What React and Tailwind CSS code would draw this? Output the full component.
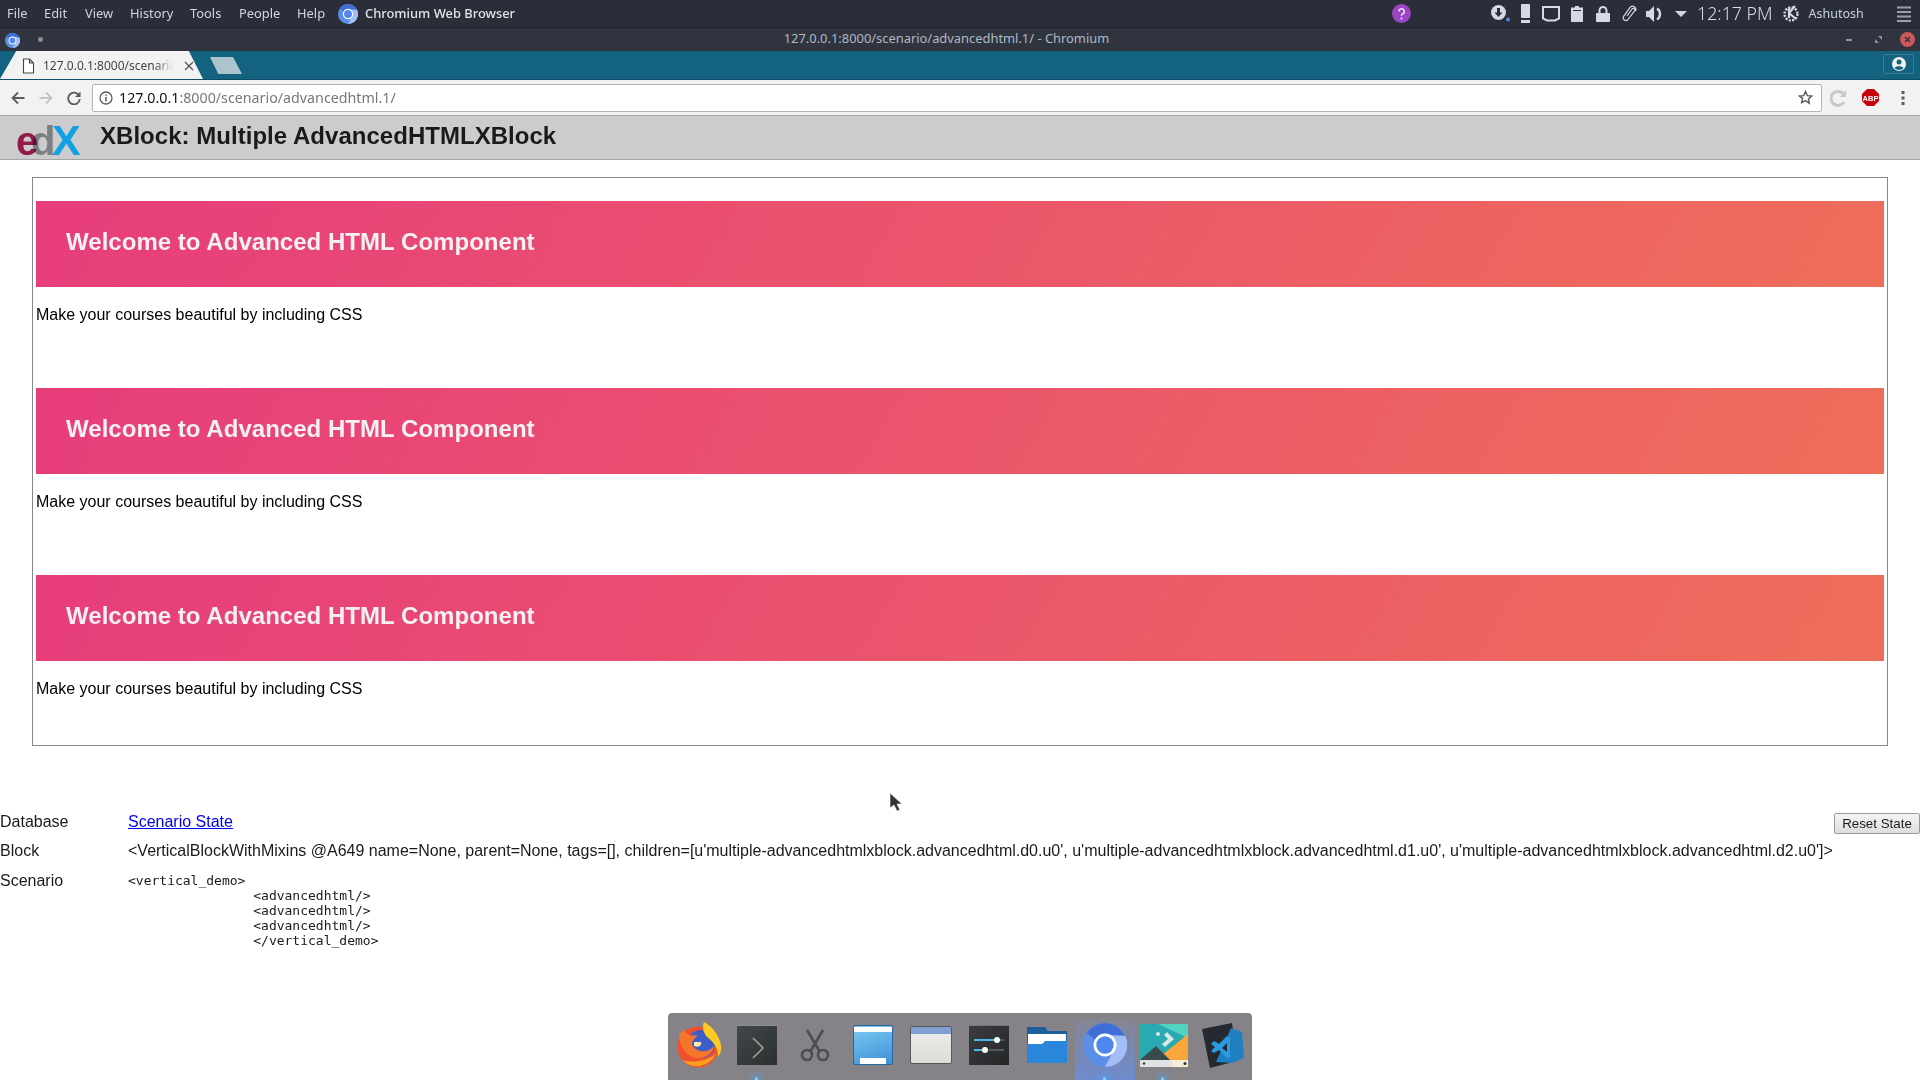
import React from 'react';

const MENU = [
  ['File', 'w-[37px]'],
  ['Edit', 'w-[41px]'],
  ['View', 'w-[45px]'],
  ['History', 'w-[60px]'],
  ['Tools', 'w-[49px]'],
  ['People', 'w-[58px]'],
  ['Help', 'w-[41px]'],
];

const SCENARIO = `<vertical_demo>
                <advancedhtml/>
                <advancedhtml/>
                <advancedhtml/>
                </vertical_demo>`;

const BLOCK_TEXT = "<VerticalBlockWithMixins @A649 name=None, parent=None, tags=[], children=[u'multiple-advancedhtmlxblock.advancedhtml.d0.u0', u'multiple-advancedhtmlxblock.advancedhtml.d1.u0', u'multiple-advancedhtmlxblock.advancedhtml.d2.u0']>";

function ChromiumIcon({ size = 20 }) {
  return (
    <svg width={size} height={size} viewBox="0 0 48 48">
      <circle cx="24" cy="24" r="24" fill="#5b8ee8" />
      <path d="M4 11A24 24 0 0 1 46.500 16L24 13a11 11 0 0 0-9 6z" fill="#3f6ed6" />
      <path d="M46 14a24 24 0 0 1-22 34l11-21a11 11 0 0 0-8-14z" fill="#a3bef6" />
      <circle cx="24" cy="24" r="12.500" fill="#fff" />
      <circle cx="24" cy="24" r="9.500" fill="#4f86f0" />
    </svg>
  );
}

function TrayIcons() {
  const c = '#d3dae3';
  return (
    <div className="flex items-center h-full">
      <svg className="ml-[1491px]" width="19" height="17" viewBox="0 0 19 17">
        <circle cx="7.500" cy="7.500" r="7.500" fill={c} />
        <path d="M6 3h3v4.500h2.500L7.500 12 3.500 7.500H6z" fill="#2b2e39" />
        <circle cx="17" cy="14.500" r="2" fill="#4a90e2" />
      </svg>
      <svg className="ml-[11px]" width="9" height="19" viewBox="0 0 9 19">
        <rect width="9" height="14" rx="1" fill={c} />
        <rect y="16" width="9" height="3" fill={c} />
      </svg>
      <svg className="ml-[12px]" width="18" height="16" viewBox="0 0 18 16">
        <path d="M1 1h16v11.500l-4 2H5l-4-2z" fill="none" stroke={c} strokeWidth="2" />
      </svg>
      <svg className="ml-[11px]" width="12" height="16" viewBox="0 0 12 16">
        <path d="M4 0h4v1.500h4V16H0V1.500h4z" fill={c} />
        <rect x="2" y="4" width="8" height="1" fill="#2b2e39" />
      </svg>
      <svg className="ml-[13px]" width="14" height="16" viewBox="0 0 14 16">
        <path d="M3.500 7V4.500a3.500 3.500 0 0 1 7 0V7" fill="none" stroke={c} strokeWidth="2" />
        <rect y="7" width="14" height="9" rx="1" fill={c} />
      </svg>
      <svg className="ml-[12px]" width="15" height="17" viewBox="0 0 15 17">
        <path d="M5 11l5-7a1.600 1.600 0 0 1 2.600 1.900L6 14.500a2.700 2.700 0 0 1-4.400-3.100L8.500 2a3.300 3.300 0 0 1 5 4" fill="none" stroke={c} strokeWidth="1.200" />
      </svg>
      <svg className="ml-[9px]" width="17" height="16" viewBox="0 0 17 16">
        <path d="M0 5h3l5-5v16l-5-5H0z" fill={c} />
        <path d="M11 2.500a6.500 6.500 0 0 1 0 11" fill="none" stroke={c} strokeWidth="2.400" />
      </svg>
      <svg className="ml-[12px]" width="12" height="6" viewBox="0 0 12 6">
        <path d="M0 0h12L6 6z" fill={c} />
      </svg>
      <span className="ml-[10px] font-['Noto_Sans',sans-serif] font-light text-[17.8px] text-[#d2deea] leading-none whitespace-nowrap">12:17 PM</span>
      <svg className="ml-[10px]" width="17" height="18" viewBox="0 0 17 18">
        <circle cx="8" cy="9" r="6.500" fill="none" stroke={c} strokeWidth="2.400" strokeDasharray="2 1.400" />
        <path d="M6 2v11M6 8l6-7M6 8l7 6" stroke={c} strokeWidth="2.200" fill="none" />
      </svg>
      <span className="ml-[9px] mt-[2px] font-['Noto_Sans',sans-serif] text-[12.5px] text-[#c6d4e2] whitespace-nowrap">Ashutosh</span>
      <svg className="ml-[33px]" width="14" height="16" viewBox="0 0 14 16">
        <path d="M0 1.500h14M0 6h14M0 10.500h14M0 15h14" stroke="#9aa0ab" strokeWidth="2" />
      </svg>
    </div>
  );
}

function TopBar() {
  return (
    <div className="relative h-[27px] bg-[#2b2e39] flex items-center pl-[7px] pt-[1px] shadow-[0_1px_1px_#23252e] z-10">
      {MENU.map(([label, width]) => (
        <span key={label} className={`${width} font-['Noto_Sans',sans-serif] text-[12.9px] text-[#cfd6e0]`}>{label}</span>
      ))}
      <ChromiumIcon />
      <span className="ml-[7px] font-['Noto_Sans',sans-serif] text-[12.9px] font-medium text-[#dfe4ea] whitespace-nowrap">Chromium Web Browser</span>
      <svg className="absolute left-[1392px] top-[4px]" width="19" height="19" viewBox="0 0 19 19">
        <circle cx="9.500" cy="9.500" r="9.500" fill="#9b45c4" />
        <path d="M7 7.500a2.600 2.600 0 1 1 3.800 2.300c-.9.500-1.300 1-1.300 2" fill="none" stroke="#e8d5f2" strokeWidth="1.700" />
        <circle cx="9.500" cy="14.500" r="1.100" fill="#e8d5f2" />
      </svg>
      <div className="absolute left-0 top-0 h-full">
        <TrayIcons />
      </div>
    </div>
  );
}

function TitleBar() {
  return (
    <div className="relative h-[24px] bg-[#2f343f] flex items-center justify-center">
      <div className="absolute left-[5px] top-[6px]"><ChromiumIcon size={15} /></div>
      <div className="absolute left-[38px] top-[10px] w-[5px] h-[5px] rounded-full bg-[#8b8f98]" />
      <span className="ml-[-27px] font-['Noto_Sans',sans-serif] text-[12.9px] text-[#afb8c5]">127.0.0.1:8000/scenario/advancedhtml.1/ - Chromium</span>
      <div className="absolute left-[1846px] top-[12px] w-[6px] h-[2px] bg-[#8d929c]" />
      <svg className="absolute left-[1875px] top-[9px]" width="7" height="7" viewBox="0 0 7 7">
        <path d="M0 7V3l4 4zM7 0v4L3 0z" fill="#8d929c" />
      </svg>
      <svg className="absolute left-[1900px] top-[5px]" width="15" height="15" viewBox="0 0 15 15">
        <circle cx="7.500" cy="7.500" r="7.500" fill="#cc575d" />
        <path d="M5 5l5 5M10 5l-5 5" stroke="#2f343f" strokeWidth="1.500" />
      </svg>
    </div>
  );
}

function TabStrip() {
  return (
    <div className="relative h-[29px] bg-[#136380] flex items-end border-b border-[#0d4d64]">
      <div className="relative h-[28px] w-[203px] bg-[#f2f2f2] [clip-path:polygon(0_100%,8%_0,93%_0,100%_100%)] flex items-center pl-[22px] pt-[1px] shrink-0">
        <svg width="13" height="16" viewBox="0 0 13 16">
          <path d="M1.500 1h6l4 4v10h-10zM7.500 1v4h4" fill="#fff" stroke="#444" strokeWidth="1.100" />
        </svg>
        <span className="ml-[8px] w-[131px] overflow-hidden whitespace-nowrap font-['Noto_Sans',sans-serif] text-[12px] text-[#444] [mask-image:linear-gradient(to_right,#000_85%,transparent)]">127.0.0.1:8000/scenario/advancedhtml.1/</span>
        <svg className="ml-[10px]" width="10" height="10" viewBox="0 0 10 10">
          <path d="M1 1l8 8M9 1l-8 8" stroke="#555" strokeWidth="1.400" />
        </svg>
      </div>
      <div className="ml-[7px] mb-[5px] h-[17px] w-[32px] bg-[#aec4cd] [clip-path:polygon(0_0,72%_0,100%_100%,26%_100%)]" />
      <div className="absolute right-[6px] top-[3px] w-[31px] h-[20px] border border-[#3a7d96] rounded-[2px] flex items-center justify-center">
        <svg width="14" height="14" viewBox="0 0 14 14">
          <circle cx="7" cy="7" r="7" fill="#f2f2f2" />
          <circle cx="7" cy="5" r="2.500" fill="#136380" />
          <path d="M2.500 11c1-2.500 8-2.500 9 0a6 6 0 0 1-9 0z" fill="#136380" />
        </svg>
      </div>
    </div>
  );
}

function Toolbar() {
  return (
    <div className="h-[36px] bg-[#f2f2f2] flex items-center border-b border-[#a8a8a8]">
      <svg className="ml-[11px]" width="14" height="14" viewBox="0 0 14 14">
        <path d="M13.500 7H2M7 1.500L1.500 7 7 12.500" fill="none" stroke="#5a5a5a" strokeWidth="1.800" />
      </svg>
      <svg className="ml-[14px]" width="14" height="14" viewBox="0 0 14 14">
        <path d="M.5 7H12M7 1.500L12.500 7 7 12.500" fill="none" stroke="#c4c4c4" strokeWidth="1.800" />
      </svg>
      <svg className="ml-[14px]" width="14" height="14" viewBox="0 0 14 14">
        <path d="M12 4.500A5.800 5.800 0 1 0 12.800 8" fill="none" stroke="#5a5a5a" strokeWidth="1.800" />
        <path d="M13.500 .5v5.500H8z" fill="#5a5a5a" />
      </svg>
      <div className="ml-[11px] w-[1730px] h-[28px] bg-white border border-[#b4b4b4] rounded-[2px] flex items-center pl-[6px] pr-[8px]">
        <svg width="14" height="14" viewBox="0 0 14 14">
          <circle cx="7" cy="7" r="6" fill="none" stroke="#5a5a5a" strokeWidth="1.300" />
          <path d="M7 6v4.500M7 3.500v1.300" stroke="#5a5a5a" strokeWidth="1.500" />
        </svg>
        <span className="ml-[6px] font-['Noto_Sans',sans-serif] text-[14.25px] text-[#111]">127.0.0.1<span className="text-[#777]">:8000/scenario/advancedhtml.1/</span></span>
        <svg className="ml-auto" width="15" height="15" viewBox="0 0 24 24">
          <path d="M12 2.500l2.900 6.400 7 .8-5.200 4.700 1.400 6.900L12 16.800l-6.100 3.500 1.400-6.900L2.100 9.700l7-.8z" fill="none" stroke="#555" strokeWidth="2.200" />
        </svg>
      </div>
      <svg className="ml-[8px]" width="17" height="18" viewBox="0 0 17 18">
        <path d="M13 4.500A7 7 0 1 0 14 13" fill="none" stroke="#c8c8c8" strokeWidth="3" />
        <path d="M16 1v7h-6z" fill="#c8c8c8" />
      </svg>
      <svg className="ml-[15px]" width="17" height="17" viewBox="0 0 17 17">
        <path d="M5 0h7l5 5v7l-5 5H5l-5-5V5z" fill="#c8000a" />
        <text x="8.500" y="11.500" textAnchor="middle" fontFamily="Liberation Sans, sans-serif" fontSize="7.500" fontWeight="700" fill="#fff">ABP</text>
      </svg>
      <svg className="ml-[22px]" width="4" height="14" viewBox="0 0 4 14">
        <path d="M2 0v3M2 5.500v3M2 11v3" stroke="#5a5a5a" strokeWidth="3" />
      </svg>
    </div>
  );
}

function EdxLogo() {
  return (
    <svg className="overflow-visible" width="66" height="40" viewBox="0 0 66 40">
      <text x="37" y="36.500" fontFamily="Liberation Sans, sans-serif" fontSize="43" fontWeight="700" fill="#10a0e4">X</text>
      <text x="16" y="36.500" fontFamily="Liberation Sans, sans-serif" fontSize="40" fontWeight="700" fill="#9a9ea3" className="mix-blend-multiply">d</text>
      <text x="1" y="36.500" fontFamily="Liberation Sans, sans-serif" fontSize="40" fontWeight="700" fill="#b5215f" className="mix-blend-multiply">e</text>
    </svg>
  );
}

function Banner() {
  return (
    <div>
      <div className="h-[86px] mr-[3px] flex items-center pl-[30px] pb-[4px] bg-[linear-gradient(120deg,#e73d7c,#ee6e5a)]">
        <h2 className="text-[24px] tracking-[0.03px] font-bold text-[#f5f0f2]">Welcome to Advanced HTML Component</h2>
      </div>
      <p className="mt-[19px] h-[82px] text-[16px] leading-[18px] text-black">Make your courses beautiful by including CSS</p>
    </div>
  );
}

function DockIcon({ children, active, dot, shift }) {
  return (
    <div className={`relative w-[58px] h-full flex items-center justify-center pb-[3px] ${shift || ''}`}>
      {active && <div className="absolute left-[-1px] right-[-1px] top-[5px] bottom-0 bg-[linear-gradient(#858590,#6f8bd0)]" />}
      <div className="relative flex">{children}</div>
      {dot && <div className="absolute bottom-0 left-[27px] w-[3px] h-[3px] bg-[#7fd0ff] rounded-t-full shadow-[0_0_6px_3px_#3fb3ff88]" />}
    </div>
  );
}

function Dock() {
  return (
    <div className="absolute left-[668px] bottom-0 h-[67px] w-[584px] px-[2px] bg-[#858387] rounded-t-[4px] flex z-20">
      <DockIcon>
        <svg width="46" height="46" viewBox="0 0 46 46">
          <circle cx="22" cy="25" r="20.500" fill="#f0512c" />
          <path d="M6 38a21 21 0 0 0 34-6c-8 6-22 10-34 6z" fill="#f9a01f" />
          <circle cx="25" cy="22" r="14" fill="#3d5ec9" />
          <path d="M28 0c8 4 15 13 17 23 1 5-1 9-3 12 0-9-4-15-11-20-4-5-5-10-3-15z" fill="#ffcb23" />
          <path d="M3 13c2-3 5-5 6-5 0 2 1 4 4 5 3 1 6 0 9 1-3 2-6 4-6 8 2 6 8 8 14 7 4-1 6-3 8-5-1 8-9 13-18 12C11 35 3 24 3 13z" fill="#f5752b" />
          <path d="M18 20h7c1 3-2 6-7 4z" fill="#ffe9a8" />
        </svg>
      </DockIcon>
      <DockIcon dot>
        <svg width="40" height="40" viewBox="0 0 40 40">
          <defs>
            <linearGradient id="termBg" x1="0" y1="0" x2="1" y2="1">
              <stop offset="0" stopColor="#41494a" />
              <stop offset="1" stopColor="#2c3030" />
            </linearGradient>
          </defs>
          <rect width="40" height="40" fill="url(#termBg)" />
          <rect width="40" height="1" fill="#8b8f8f" />
          <path d="M16 13l10 10-10 10" fill="none" stroke="#9a9e9e" strokeWidth="1.600" />
        </svg>
      </DockIcon>
      <DockIcon>
        <svg width="30" height="33" viewBox="0 0 30 33">
          <path d="M7 1l13 22M23 1L10 23" stroke="#4d4d50" strokeWidth="2.600" fill="none" />
          <circle cx="7" cy="26" r="5" fill="none" stroke="#4d4d50" strokeWidth="2.600" />
          <circle cx="23" cy="26" r="5" fill="none" stroke="#4d4d50" strokeWidth="2.600" />
        </svg>
      </DockIcon>
      <DockIcon>
        <div className="w-[40px] h-[40px] rounded-[2px] border border-[#27689f] bg-[linear-gradient(160deg,#7dcdf0,#3d8fd9)] flex flex-col justify-between">
          <div className="h-[5px] mt-[1px] bg-white" />
          <div className="mx-auto h-[6px] w-[26px] bg-white" />
        </div>
      </DockIcon>
      <DockIcon>
        <div className="w-[42px] h-[38px] rounded-[2px] border border-[#56585c] bg-[linear-gradient(#eeeeea,#dcddd8)]">
          <div className="h-[7px] bg-[#7f9fd0]" />
        </div>
      </DockIcon>
      <DockIcon>
        <svg width="40" height="40" viewBox="0 0 40 40">
          <defs>
            <linearGradient id="setBg" x1="0" y1="0" x2="1" y2="1">
              <stop offset="0" stopColor="#3b3d40" />
              <stop offset="1" stopColor="#242628" />
            </linearGradient>
          </defs>
          <rect width="40" height="40" fill="url(#setBg)" />
          <rect width="40" height="1" fill="#77797c" />
          <path d="M5 15h24" stroke="#4db6ec" strokeWidth="2" />
          <path d="M29 15h6M20 25h15" stroke="#55585c" strokeWidth="2" />
          <path d="M5 25h11" stroke="#4db6ec" strokeWidth="2" />
          <circle cx="28" cy="15" r="3" fill="#fff" />
          <circle cx="16" cy="25" r="3" fill="#fff" />
        </svg>
      </DockIcon>
      <DockIcon>
        <svg width="40" height="36" viewBox="0 0 40 36">
          <path d="M0 0h18l3 4h19v14H0z" fill="#1c5f9c" />
          <rect x="1" y="7" width="38" height="11" fill="#fff" />
          <path d="M0 17h15l3-3h22v22H0z" fill="#2a86da" />
        </svg>
      </DockIcon>
      <DockIcon active dot>
        <ChromiumIcon size={44} />
      </DockIcon>
      <DockIcon dot shift="pl-[1px]">
        <svg width="48" height="43" viewBox="0 0 48 43">
          <rect width="48" height="36" fill="#29a9b0" />
          <path d="M18 0h30v14z" fill="#4fd4c0" />
          <path d="M48 10v26H16z" fill="#fba63a" />
          <path d="M0 36l16-14 14 14z" fill="#3b4a4a" />
          <path d="M27 8l7 7-9 8-3-3 6-5-4-4z" fill="#d8e8e8" />
          <circle cx="18" cy="10" r="2" fill="#d8e8e8" />
          <rect y="36" width="48" height="7" fill="#dfe3e3" />
          <rect x="32" y="36" width="16" height="7" fill="#f7eddb" />
          <circle cx="45" cy="39.500" r="1.500" fill="#333" />
          <circle cx="4" cy="39.500" r="1.200" fill="#333" />
        </svg>
      </DockIcon>
      <DockIcon shift="pl-[4px]">
        <svg width="42" height="45" viewBox="0 0 42 45">
          <path d="M0 6L30 0l5 38-27 7z" fill="#262a30" />
          <path d="M29 5l11 4 2 26-12 5-16-1z" fill="#1f7fc0" />
          <path d="M9 21l3-3 5 3 8-8 3 2v19l-3 1-8-8-5 3-3-2 4-4z" fill="#2a9be0" />
          <path d="M25 20l-5 5 5 4z" fill="#262a30" />
        </svg>
      </DockIcon>
    </div>
  );
}

export default function App() {
  return (
    <div className="relative w-[1920px] h-[1080px] overflow-hidden bg-white font-['Liberation_Sans',Arial,sans-serif] text-black">
      <TopBar />
      <TitleBar />
      <TabStrip />
      <Toolbar />

      <div className="h-[44px] bg-[#cccccc] border-b-[1px] border-[#a5a5a5] flex items-center pl-[15px]">
        <EdxLogo />
        <h1 className="ml-[19px] mb-[4px] text-[24px] tracking-[0.03px] font-bold text-[#1a1a1a] whitespace-nowrap">XBlock: Multiple AdvancedHTMLXBlock</h1>
      </div>

      <div className="mt-[17px] mx-[32px] h-[569px] border border-[#888] pl-[3px] pt-[23px]">
        <Banner />
        <Banner />
        <Banner />
      </div>

      <div className="mt-[66px] text-[16px] text-[#1a1a1a]">
        <div className="flex h-[29px] items-start">
          <span className="w-[128px] shrink-0 leading-[20px]">Database</span>
          <a href="#state" className="text-[#0000ee] underline leading-[20px]">Scenario State</a>
          <button className="ml-auto mt-[1px] w-[86px] h-[21px] border border-[#999] rounded-[2px] bg-[linear-gradient(#f4f4f4,#dedede)] text-[13.33px] leading-none">Reset State</button>
        </div>
        <div className="flex h-[30px] items-start">
          <span className="w-[128px] shrink-0 leading-[20px]">Block</span>
          <span className="whitespace-nowrap leading-[20px]">{BLOCK_TEXT}</span>
        </div>
        <div className="flex items-start">
          <span className="w-[128px] shrink-0 leading-[20px]">Scenario</span>
          <pre className="font-['DejaVu_Sans_Mono',monospace] text-[13px] leading-[15px] pt-[2px]">{SCENARIO}</pre>
        </div>
      </div>

      <svg className="absolute left-[889px] top-[792px]" width="13" height="20" viewBox="0 0 13 20">
        <path d="M1 1v15l4-3 3 6 3-1-3-6h5z" fill="#333" stroke="#fff" strokeWidth=".6" />
      </svg>

      <Dock />
    </div>
  );
}
